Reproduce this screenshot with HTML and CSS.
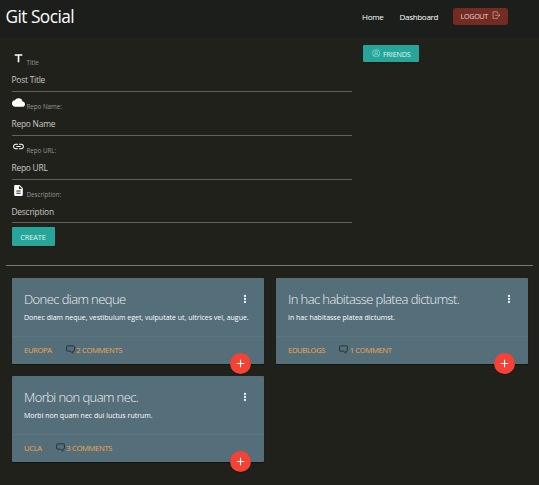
FILE: index.html
```html
<!DOCTYPE html>
<html lang="en">
<head>
<meta charset="utf-8">
<title>Git Social</title>
<link rel="stylesheet" href="styles.css">
</head>
<body>
<svg width="0" height="0" class="defs">
  <symbol id="chat" viewBox="0 0 16 16"><path fill="none" stroke="currentColor" stroke-width="1.500" d="M2.500 1.500h11q1.500 0 1.500 1.500v6q0 2-1.500 2h-1.500v3.500l-4-3.500H2.500Q1 11 1 9V3q0-1.500 1.500-1.500z"/></symbol>
  <symbol id="more" viewBox="0 0 24 24"><path fill="currentColor" d="M12 8.300a2.300 2.300 0 1 0 0-4.600 2.300 2.300 0 0 0 0 4.600zm0 1.400a2.300 2.300 0 1 0 0 4.600 2.300 2.300 0 0 0 0-4.600zm0 6a2.300 2.300 0 1 0 0 4.600 2.300 2.300 0 0 0 0-4.600z"/></symbol>
  <symbol id="add" viewBox="0 0 24 24"><path fill="currentColor" d="M19 13h-6v6h-2v-6H5v-2h6V5h2v6h6v2z"/></symbol>
</svg>
<header class="navbar">
  <a class="brand">Git Social</a>
  <nav class="links">
    <a class="home">Home</a>
    <a class="dash">Dashboard</a>
    <button class="logout"><span>LOGOUT</span><svg viewBox="0 0 16 16"><path fill="none" stroke="currentColor" stroke-width="1.300" d="M10 4.500V1.500H2v13h8v-3M5.500 8H15M12 5l3 3-3 3"/></svg></button>
  </nav>
</header>
<main>
  <section class="top">
    <form class="form">
      <div class="field">
        <div class="label"><svg viewBox="0 0 24 24"><path d="M5 4v3h5.500v12h3V7H19V4z"/></svg><label>Title</label></div>
        <div class="input"><span>Post Title</span></div>
      </div>
      <div class="field">
        <div class="label"><svg viewBox="0 0 24 24"><path d="M19.350 10.040A7.490 7.490 0 0 0 12 4C9.110 4 6.600 5.640 5.350 8.040A5.994 5.994 0 0 0 0 14c0 3.310 2.690 6 6 6h13c2.760 0 5-2.240 5-5 0-2.640-2.050-4.780-4.650-4.960z"/></svg><label>Repo Name:</label></div>
        <div class="input"><span>Repo Name</span></div>
      </div>
      <div class="field">
        <div class="label"><svg viewBox="0 0 24 24"><path d="M3.900 12c0-1.710 1.390-3.100 3.100-3.100h4V7H7c-2.760 0-5 2.240-5 5s2.240 5 5 5h4v-1.900H7c-1.710 0-3.100-1.390-3.100-3.100zM8 13h8v-2H8v2zm9-6h-4v1.900h4c1.710 0 3.100 1.390 3.100 3.100s-1.390 3.100-3.100 3.100h-4V17h4c2.760 0 5-2.240 5-5s-2.240-5-5-5z"/></svg><label>Repo URL:</label></div>
        <div class="input"><span>Repo URL</span></div>
      </div>
      <div class="field last">
        <div class="label"><svg viewBox="0 0 24 24"><path d="M14 2H6c-1.100 0-1.990.900-1.990 2L4 20c0 1.100.890 2 1.990 2H18c1.100 0 2-.900 2-2V8l-6-6zm2 16H8v-2h8v2zm0-4H8v-2h8v2zm-3-5V3.500L18.500 9H13z"/></svg><label>Description:</label></div>
        <div class="input"><span>Description</span></div>
      </div>
      <button class="btn create"><span>CREATE</span></button>
    </form>
    <aside>
      <button class="btn friends"><svg viewBox="0 0 16 16"><g fill="none" stroke="currentColor"><circle cx="8" cy="8" r="7"/><circle cx="8" cy="6.500" r="2.500"/><path d="M3.500 13q1-3.500 4.500-3.500t4.500 3.500"/></g></svg><span>FRIENDS</span></button>
    </aside>
  </section>
  <hr>
  <section class="cards">
    <article class="card">
      <div class="content">
        <h2><span>Donec diam neque</span><svg class="more"><use href="#more"/></svg></h2>
        <p><span>Donec diam neque, vestibulum eget, vulputate ut, ultrices vel, augue.</span></p>
      </div>
      <div class="action"><a>EUROPA</a><a class="comments"><svg><use href="#chat"/></svg><span>2 COMMENTS</span></a></div>
      <button class="fab"><svg><use href="#add"/></svg></button>
    </article>
    <article class="card">
      <div class="content">
        <h2><span>In hac habitasse platea dictumst.</span><svg class="more"><use href="#more"/></svg></h2>
        <p><span>In hac habitasse platea dictumst.</span></p>
      </div>
      <div class="action"><a>EDUBLOGS</a><a class="comments"><svg><use href="#chat"/></svg><span>1 COMMENT</span></a></div>
      <button class="fab"><svg><use href="#add"/></svg></button>
    </article>
    <article class="card">
      <div class="content">
        <h2><span>Morbi non quam nec.</span><svg class="more"><use href="#more"/></svg></h2>
        <p><span>Morbi non quam nec dui luctus rutrum.</span></p>
      </div>
      <div class="action"><a>UCLA</a><a class="comments"><svg><use href="#chat"/></svg><span>3 COMMENTS</span></a></div>
      <button class="fab"><svg><use href="#add"/></svg></button>
    </article>
  </section>
</main>
</body>
</html>
```
FILE: styles.css
```css
* { box-sizing: border-box; }
body {
  margin: 0;
  height: 485px;
  overflow: hidden;
  background: #21211c;
  color: #fff;
  font-family: "Open Sans", "Noto Sans", sans-serif;
  font-size: 7.5px;
}
button { font: inherit; color: inherit; border: 0; padding: 0; }
span, label, a { white-space: nowrap; }
.defs { position: absolute; }

.navbar {
  height: 37px;
  padding: 0 31px 0 5.5px;
  display: flex;
  justify-content: space-between;
  background: #1b1e1b;
}
.brand { font-size: 17.3px; line-height: 34px; letter-spacing: -0.55px; }
.links { display: flex; width: 146px; line-height: 33px; font-size: 8px; }
.home { width: 37.5px; letter-spacing: -0.25px; }
.dash { width: 53.5px; letter-spacing: -0.3px; }
.logout {
  width: 55px;
  height: 17px;
  margin-top: 8px;
  display: flex;
  align-items: center;
  justify-content: center;
  gap: 4px;
  border-radius: 3px;
  background: #742b22;
  color: #e6d5d3;
  font-size: 7.2px;
  font-weight: 500;
  letter-spacing: -0.35px;
}
.logout svg { width: 8.5px; height: 8.5px; margin-top: -3px; opacity: .8; }

.top { display: flex; height: 228px; padding: 8px 12px 0 11.5px; }
.form { width: 340px; margin-right: 11.5px; padding-top: 4px; }
.field { height: 43.900px; }
.last .input { height: 22.500px; }
.label { height: 20px; display: flex; align-items: flex-start; gap: 2px; }
.label svg { width: 13px; height: 13px; margin-top: 3px; fill: #fff; }
.label label { font-size: 6.200px; line-height: 10px; margin-top: 9.300px; color: #969692; }
.input {
  height: 23px;
  line-height: 21.500px;
  border-bottom: 1px solid #62625d;
  color: #c9c9c6;
  font-size: 8.400px;
  letter-spacing: -0.22px;
}
.btn {
  display: flex;
  align-items: center;
  justify-content: center;
  background: #26a69a;
  color: #e3f4f2;
  border-radius: 1px;
  box-shadow: 0 1px 1px rgba(0, 0, 0, .4);
  font-size: 7.400px;
  font-weight: 500;
  letter-spacing: -0.15px;
}
.create { width: 43px; height: 19px; margin-top: 2.500px; }
.friends { width: 56px; height: 17px; gap: 3px; font-size: 7.100px; }
.friends svg { width: 8.500px; height: 8.500px; margin-top: -1px; opacity: .85; }
.friends span { margin-top: 1px; }
hr { margin: 0 6px; height: 1px; border: 0; background: #777772; }

.cards {
  display: grid;
  grid-template-columns: 252px 252px;
  gap: 12px;
  padding: 11.500px 11.500px 0;
}
.card {
  position: relative;
  height: 86px;
  background: #546e7a;
  border-radius: 1px;
  box-shadow: 0 1px 1px rgba(0, 0, 0, .4);
}
.content { height: 58px; padding: 12px 13px 0 12.500px; }
h2 {
  margin: 0;
  height: 20px;
  line-height: 19px;
  display: flex;
  justify-content: space-between;
  font-size: 13px;
  font-weight: 300;
  letter-spacing: -0.590px;
  color: #eef1f2;
}
.more { width: 12px; height: 12px; margin-top: 3px; }
p { margin: 3px 0 0; font-size: 7px; line-height: 10px; font-weight: 500; }
.action {
  height: 28px;
  padding: 0 12.500px;
  display: flex;
  gap: 14px;
  border-top: 1px solid #5c7581;
  color: #f0a650;
  font-size: 7.700px;
  letter-spacing: -0.380px;
  line-height: 26px;
}
.comments { display: flex; gap: 1.500px; }
.comments svg { width: 9px; height: 9px; margin-top: 8px; color: #1d2c33; }
.fab {
  position: absolute;
  right: 13px;
  bottom: -10.500px;
  z-index: 1;
  width: 21px;
  height: 21px;
  display: grid;
  place-items: center;
  border-radius: 50%;
  background: #f44336;
  box-shadow: 0 1px 1px rgba(0, 0, 0, .3);
}
.fab svg { width: 13px; height: 13px; }
```
